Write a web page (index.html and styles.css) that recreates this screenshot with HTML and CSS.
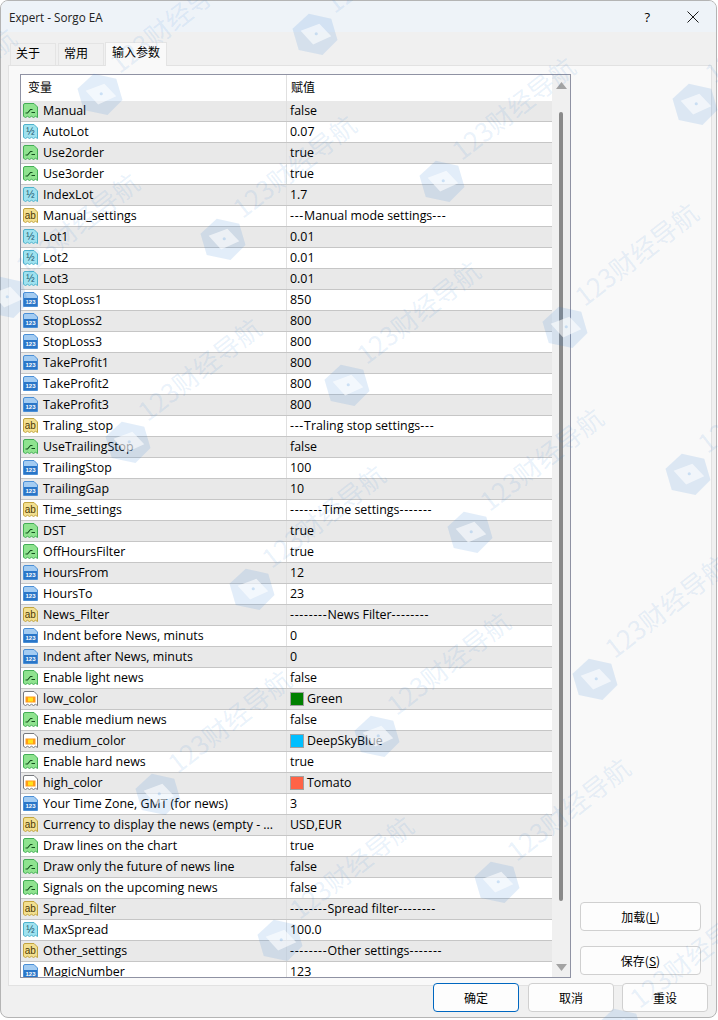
FILE: index.html
```html
<!DOCTYPE html>
<html lang="zh">
<head>
<meta charset="utf-8">
<title>Expert - Sorgo EA</title>
<link rel="stylesheet" href="styles.css">
</head>
<body>
<svg class="defs" width="0" height="0" aria-hidden="true">
  <defs>
    <symbol id="sheet-g" viewBox="1 1 16 16"><path d="M1.5 3Q1.5 1.5 3 1.5H12L15.5 5V15.5L13.5 14.3 11.5 15.5 9.5 14.3 7.5 15.5 5.5 14.3 3.5 15.5 1.5 14.3Z" fill="#8fe38f" stroke="#43ad55"/><path d="M3.5 11H5.5L8.5 7.5H10.5M9.5 10.5H13" fill="none" stroke="#14501e" stroke-width="1.1"/></symbol>
    <symbol id="sheet-d" viewBox="1 1 16 16"><path d="M1.5 3Q1.5 1.5 3 1.5H12L15.5 5V15.5L13.5 14.3 11.5 15.5 9.5 14.3 7.5 15.5 5.5 14.3 3.5 15.5 1.5 14.3Z" fill="#9fe2ef" stroke="#4fb2cc"/><text x="8.4" y="12" class="glyph d">½</text></symbol>
    <symbol id="sheet-i" viewBox="1 1 16 16"><path d="M1.5 3Q1.5 1.5 3 1.5H12L15.5 5V15.5H1.5Z" fill="#a4ccf2" stroke="#4b8fd6"/><rect x="2" y="7" width="13" height="8" fill="#2a76c8"/><text x="8.5" y="13.4" class="glyph i">123</text></symbol>
    <symbol id="sheet-s" viewBox="1 1 16 16"><path d="M1.5 3Q1.5 1.5 3 1.5H12L15.5 5V15.5L13.5 14.3 11.5 15.5 9.5 14.3 7.5 15.5 5.5 14.3 3.5 15.5 1.5 14.3Z" fill="#f3df8f" stroke="#c2a440"/><text x="8.3" y="12" class="glyph s">ab</text></symbol>
    <symbol id="sheet-c" viewBox="1 1 16 16"><path d="M1.5 3Q1.5 1.5 3 1.5H12L15.5 5V15.5L13.5 14.3 11.5 15.5 9.5 14.3 7.5 15.5 5.5 14.3 3.5 15.5 1.5 14.3Z" fill="#fff" stroke="#77797e"/><rect x="3.5" y="6.5" width="10" height="6" fill="#ff9a1a"/><rect x="6" y="7.5" width="5" height="4" fill="#ffe21a"/></symbol>
    <symbol id="hex" viewBox="0 0 80 80"><path d="M30 6 66 14 76 48 52 72 14 64 4 30Z" fill="#2f80d8" fill-opacity=".14"/><path d="M17 33 47 22 66 42 37 55Z" fill="#fff" fill-opacity=".6"/><circle cx="42" cy="38" r="2.5" fill="#2f80d8" fill-opacity=".2"/></symbol>
  </defs>
</svg>
<div class="window">
  <header class="titlebar">
    <span class="title">Expert - Sorgo EA</span>
    <span class="help">?</span>
    <svg class="close" width="12" height="12" viewBox="0 0 12 12"><path d="M.5.5 11.5 11.5M11.5.5.5 11.5" stroke="#1a1a1a" fill="none"/></svg>
  </header>
  <nav class="tabs">
    <span class="tab">关于</span>
    <span class="tab">常用</span>
    <span class="tab active">输入参数</span>
  </nav>
  <main class="panel">
    <section class="list">
      <div class="table">
        <div class="head"><span class="hname">变量</span><span class="hval">赋值</span></div>
        <div class="row"><span class="name"><svg class="ic"><use href="#sheet-g"/></svg>Manual</span><span class="val">false</span></div>
        <div class="row"><span class="name"><svg class="ic"><use href="#sheet-d"/></svg>AutoLot</span><span class="val">0.07</span></div>
        <div class="row"><span class="name"><svg class="ic"><use href="#sheet-g"/></svg>Use2order</span><span class="val">true</span></div>
        <div class="row"><span class="name"><svg class="ic"><use href="#sheet-g"/></svg>Use3order</span><span class="val">true</span></div>
        <div class="row"><span class="name"><svg class="ic"><use href="#sheet-d"/></svg>IndexLot</span><span class="val">1.7</span></div>
        <div class="row"><span class="name"><svg class="ic"><use href="#sheet-s"/></svg>Manual_settings</span><span class="val"><span class="dash">---</span>Manual mode settings<span class="dash">---</span></span></div>
        <div class="row"><span class="name"><svg class="ic"><use href="#sheet-d"/></svg>Lot1</span><span class="val">0.01</span></div>
        <div class="row"><span class="name"><svg class="ic"><use href="#sheet-d"/></svg>Lot2</span><span class="val">0.01</span></div>
        <div class="row"><span class="name"><svg class="ic"><use href="#sheet-d"/></svg>Lot3</span><span class="val">0.01</span></div>
        <div class="row"><span class="name"><svg class="ic"><use href="#sheet-i"/></svg>StopLoss1</span><span class="val">850</span></div>
        <div class="row"><span class="name"><svg class="ic"><use href="#sheet-i"/></svg>StopLoss2</span><span class="val">800</span></div>
        <div class="row"><span class="name"><svg class="ic"><use href="#sheet-i"/></svg>StopLoss3</span><span class="val">800</span></div>
        <div class="row"><span class="name"><svg class="ic"><use href="#sheet-i"/></svg>TakeProfit1</span><span class="val">800</span></div>
        <div class="row"><span class="name"><svg class="ic"><use href="#sheet-i"/></svg>TakeProfit2</span><span class="val">800</span></div>
        <div class="row"><span class="name"><svg class="ic"><use href="#sheet-i"/></svg>TakeProfit3</span><span class="val">800</span></div>
        <div class="row"><span class="name"><svg class="ic"><use href="#sheet-s"/></svg>Traling_stop</span><span class="val"><span class="dash">---</span>Traling stop settings<span class="dash">---</span></span></div>
        <div class="row"><span class="name"><svg class="ic"><use href="#sheet-g"/></svg>UseTrailingStop</span><span class="val">false</span></div>
        <div class="row"><span class="name"><svg class="ic"><use href="#sheet-i"/></svg>TrailingStop</span><span class="val">100</span></div>
        <div class="row"><span class="name"><svg class="ic"><use href="#sheet-i"/></svg>TrailingGap</span><span class="val">10</span></div>
        <div class="row"><span class="name"><svg class="ic"><use href="#sheet-s"/></svg>Time_settings</span><span class="val"><span class="dash">-------</span>Time settings<span class="dash">-------</span></span></div>
        <div class="row"><span class="name"><svg class="ic"><use href="#sheet-g"/></svg>DST</span><span class="val">true</span></div>
        <div class="row"><span class="name"><svg class="ic"><use href="#sheet-g"/></svg>OffHoursFilter</span><span class="val">true</span></div>
        <div class="row"><span class="name"><svg class="ic"><use href="#sheet-i"/></svg>HoursFrom</span><span class="val">12</span></div>
        <div class="row"><span class="name"><svg class="ic"><use href="#sheet-i"/></svg>HoursTo</span><span class="val">23</span></div>
        <div class="row"><span class="name"><svg class="ic"><use href="#sheet-s"/></svg>News_Filter</span><span class="val"><span class="dash">--------</span>News Filter<span class="dash">--------</span></span></div>
        <div class="row"><span class="name"><svg class="ic"><use href="#sheet-i"/></svg>Indent before News, minuts</span><span class="val">0</span></div>
        <div class="row"><span class="name"><svg class="ic"><use href="#sheet-i"/></svg>Indent after News, minuts</span><span class="val">0</span></div>
        <div class="row"><span class="name"><svg class="ic"><use href="#sheet-g"/></svg>Enable light news</span><span class="val">false</span></div>
        <div class="row"><span class="name"><svg class="ic"><use href="#sheet-c"/></svg>low_color</span><span class="val"><i class="swatch green"></i>Green</span></div>
        <div class="row"><span class="name"><svg class="ic"><use href="#sheet-g"/></svg>Enable medium news</span><span class="val">false</span></div>
        <div class="row"><span class="name"><svg class="ic"><use href="#sheet-c"/></svg>medium_color</span><span class="val"><i class="swatch sky"></i>DeepSkyBlue</span></div>
        <div class="row"><span class="name"><svg class="ic"><use href="#sheet-g"/></svg>Enable hard news</span><span class="val">true</span></div>
        <div class="row"><span class="name"><svg class="ic"><use href="#sheet-c"/></svg>high_color</span><span class="val"><i class="swatch tomato"></i>Tomato</span></div>
        <div class="row"><span class="name"><svg class="ic"><use href="#sheet-i"/></svg>Your Time Zone, GMT (for news)</span><span class="val">3</span></div>
        <div class="row"><span class="name"><svg class="ic"><use href="#sheet-s"/></svg>Currency to display the news (empty - ...</span><span class="val">USD,EUR</span></div>
        <div class="row"><span class="name"><svg class="ic"><use href="#sheet-g"/></svg>Draw lines on the chart</span><span class="val">true</span></div>
        <div class="row"><span class="name"><svg class="ic"><use href="#sheet-g"/></svg>Draw only the future of news line</span><span class="val">false</span></div>
        <div class="row"><span class="name"><svg class="ic"><use href="#sheet-g"/></svg>Signals on the upcoming news</span><span class="val">false</span></div>
        <div class="row"><span class="name"><svg class="ic"><use href="#sheet-s"/></svg>Spread_filter</span><span class="val"><span class="dash">--------</span>Spread filter<span class="dash">--------</span></span></div>
        <div class="row"><span class="name"><svg class="ic"><use href="#sheet-d"/></svg>MaxSpread</span><span class="val">100.0</span></div>
        <div class="row"><span class="name"><svg class="ic"><use href="#sheet-s"/></svg>Other_settings</span><span class="val"><span class="dash">--------</span>Other settings<span class="dash">-------</span></span></div>
        <div class="row"><span class="name"><svg class="ic"><use href="#sheet-i"/></svg>MagicNumber</span><span class="val">123</span></div>
      </div>
      <div class="scrollbar">
        <svg class="arrow" width="11" height="7" viewBox="0 0 11 7"><path d="M5.5 0 11 7H0Z" fill="#a3a3a3"/></svg>
        <div class="track"><div class="thumb"></div></div>
        <svg class="arrow" width="11" height="7" viewBox="0 0 11 7"><path d="M0 0H11L5.5 7Z" fill="#a3a3a3"/></svg>
      </div>
    </section>
    <aside class="side">
      <button class="btn side-btn">加载(<u>L</u>)</button>
      <button class="btn side-btn">保存(<u>S</u>)</button>
    </aside>
  </main>
  <footer class="footer">
    <button class="btn foot-btn primary">确定</button>
    <button class="btn foot-btn">取消</button>
    <button class="btn foot-btn">重设</button>
  </footer>
</div>
<svg class="watermark" width="718" height="1020" viewBox="0 0 718 1020" aria-hidden="true">
  <g class="wm" transform="translate(-117 153)"><use href="#hex" x="-25" y="-25" width="50" height="50"/><text x="28" y="-4" transform="rotate(-38)">123财经导航</text></g>
  <g class="wm" transform="translate(6 298)"><use href="#hex" x="-25" y="-25" width="50" height="50"/><text x="28" y="-4" transform="rotate(-38)">123财经导航</text></g>
  <g class="wm" transform="translate(100 95)"><use href="#hex" x="-25" y="-25" width="50" height="50"/><text x="28" y="-4" transform="rotate(-38)">123财经导航</text></g>
  <g class="wm" transform="translate(315 35)"><use href="#hex" x="-25" y="-25" width="50" height="50"/><text x="28" y="-4" transform="rotate(-38)">123财经导航</text></g>
  <g class="wm" transform="translate(695 105)"><use href="#hex" x="-25" y="-25" width="50" height="50"/><text x="28" y="-4" transform="rotate(-38)">123财经导航</text></g>
  <g class="wm" transform="translate(442 182)"><use href="#hex" x="-25" y="-25" width="50" height="50"/><text x="28" y="-4" transform="rotate(-38)">123财经导航</text></g>
  <g class="wm" transform="translate(223 240)"><use href="#hex" x="-25" y="-25" width="50" height="50"/><text x="28" y="-4" transform="rotate(-38)">123财经导航</text></g>
  <g class="wm" transform="translate(565 328)"><use href="#hex" x="-25" y="-25" width="50" height="50"/><text x="28" y="-4" transform="rotate(-38)">123财经导航</text></g>
  <g class="wm" transform="translate(347 386)"><use href="#hex" x="-25" y="-25" width="50" height="50"/><text x="28" y="-4" transform="rotate(-38)">123财经导航</text></g>
  <g class="wm" transform="translate(128 443)"><use href="#hex" x="-25" y="-25" width="50" height="50"/><text x="28" y="-4" transform="rotate(-38)">123财经导航</text></g>
  <g class="wm" transform="translate(688 475)"><use href="#hex" x="-25" y="-25" width="50" height="50"/><text x="28" y="-4" transform="rotate(-38)">123财经导航</text></g>
  <g class="wm" transform="translate(470 533)"><use href="#hex" x="-25" y="-25" width="50" height="50"/><text x="28" y="-4" transform="rotate(-38)">123财经导航</text></g>
  <g class="wm" transform="translate(252 590)"><use href="#hex" x="-25" y="-25" width="50" height="50"/><text x="28" y="-4" transform="rotate(-38)">123财经导航</text></g>
  <g class="wm" transform="translate(595 680)"><use href="#hex" x="-25" y="-25" width="50" height="50"/><text x="28" y="-4" transform="rotate(-38)">123财经导航</text></g>
  <g class="wm" transform="translate(377 737)"><use href="#hex" x="-25" y="-25" width="50" height="50"/><text x="28" y="-4" transform="rotate(-38)">123财经导航</text></g>
  <g class="wm" transform="translate(158 795)"><use href="#hex" x="-25" y="-25" width="50" height="50"/><text x="28" y="-4" transform="rotate(-38)">123财经导航</text></g>
  <g class="wm" transform="translate(497 883)"><use href="#hex" x="-25" y="-25" width="50" height="50"/><text x="28" y="-4" transform="rotate(-38)">123财经导航</text></g>
  <g class="wm" transform="translate(280 941)"><use href="#hex" x="-25" y="-25" width="50" height="50"/><text x="28" y="-4" transform="rotate(-38)">123财经导航</text></g>
  <g class="wm" transform="translate(620 1030)"><use href="#hex" x="-25" y="-25" width="50" height="50"/><text x="28" y="-4" transform="rotate(-38)">123财经导航</text></g>
</svg>
</body>
</html>
```
FILE: styles.css
```css
html, body { margin: 0; padding: 0; background: #fff; }
body { width: 718px; height: 1020px; overflow: hidden; position: relative; font-family: "Open Sans", "Noto Sans", "Noto Sans CJK SC", sans-serif; font-size: 12.4px; color: #000; }
.defs { position: absolute; }
.glyph { font-family: "Liberation Sans", sans-serif; text-anchor: middle; }
.glyph.d { font-size: 10px; fill: #14506a; }
.glyph.i { font-size: 6px; font-weight: 700; fill: #fff; }
.glyph.s { font-size: 10px; fill: #4c3a08; }

.window { box-sizing: border-box; width: 717px; height: 1018px; border: 1px solid #b4b4b4; border-radius: 8px; background: #f0f0f0; overflow: hidden; display: flex; flex-direction: column; }
.titlebar { height: 31px; flex: none; background: #eef3f8; display: flex; align-items: center; padding-left: 8px; }
.title { font-size: 11.7px; color: #222; flex: 1; }
.help { font-size: 13px; margin-right: 37px; }
.close { margin-right: 17px; }

.tabs { height: 33px; flex: none; display: flex; align-items: flex-end; padding-left: 9px; gap: 2px; box-sizing: border-box; }
.tab { width: 46px; height: 22px; box-sizing: border-box; border: 1px solid #e4e4e4; border-bottom: 0; display: flex; align-items: center; padding: 0 0 4px 5px; font-size: 12px; font-family: "Noto Sans CJK SC", sans-serif; }
.tab.active { width: 62px; height: 24px; margin-left: -1px; background: #f9f9f9; position: relative; top: 1px; padding: 0 0 6px 6px; }

.panel { flex: none; height: 921px; margin: 0 4px 0 7px; box-sizing: border-box; border: 1px solid #e2e2e2; background: #f9f9f9; padding: 8px 11px 7px; display: flex; }
.list { width: 551px; height: 904px; box-sizing: border-box; border: 1px solid #8f92a3; background: #fff; display: flex; flex: none; }
.table { width: 531px; overflow: hidden; flex: none; }
.head { height: 26px; display: flex; font-family: "Noto Sans CJK SC", sans-serif; font-size: 12px; }
.hname { width: 266px; box-sizing: border-box; padding-left: 7px; border-right: 1px solid #e0e0e0; height: 26px; line-height: 24px; }
.hval { padding-left: 4px; line-height: 24px; }
.row { height: 21px; box-sizing: border-box; border-bottom: 1px solid #c6c6c6; display: flex; line-height: 20px; white-space: nowrap; }
.row:nth-child(even) { background: #e9e9e9; }
.name { width: 266px; box-sizing: border-box; padding-left: 2px; display: flex; align-items: center; border-right: 1px solid #e0e0e0; overflow: hidden; }
.val { padding-left: 3px; display: flex; align-items: center; }
.dash { letter-spacing: .7px; }
.ic { width: 16px; height: 16px; margin-right: 4px; flex: none; }
.swatch { width: 12px; height: 12px; border: 1px solid #a0a0a0; margin-right: 3px; }
.green { background: #008000; }
.sky { background: #00bfff; }
.tomato { background: #ff6347; }

.scrollbar { flex: 1; background: #f0f0f0; display: flex; flex-direction: column; align-items: center; padding: 7px 0 6px; }
.arrow { flex: none; }
.track { flex: 1; width: 4px; padding: 23px 0 63px; box-sizing: border-box; }
.thumb { height: 100%; background: #8a8a8a; border-radius: 2px; }

.side { flex: 1; display: flex; flex-direction: column; justify-content: flex-end; gap: 15px; padding: 0 0 3px 9px; }
.btn { font-family: "Noto Sans CJK SC", sans-serif; font-size: 12px; color: #000; background: #fdfdfd; border: 1px solid #d0d0d0; border-radius: 4px; padding: 0; }
.side-btn { width: 121px; height: 29px; flex: none; }

.footer { margin-top: -3px; position: relative; display: flex; justify-content: flex-end; gap: 8px; padding-right: 8px; }
.foot-btn { width: 86px; height: 29px; }
.primary { border-color: #0067c0; margin-right: 1px; }

.watermark { position: absolute; left: 0; top: 0; pointer-events: none; }
.wm text { font-family: "Noto Sans CJK SC", sans-serif; font-size: 26px; fill: #2f80d8; fill-opacity: .11; }
```
